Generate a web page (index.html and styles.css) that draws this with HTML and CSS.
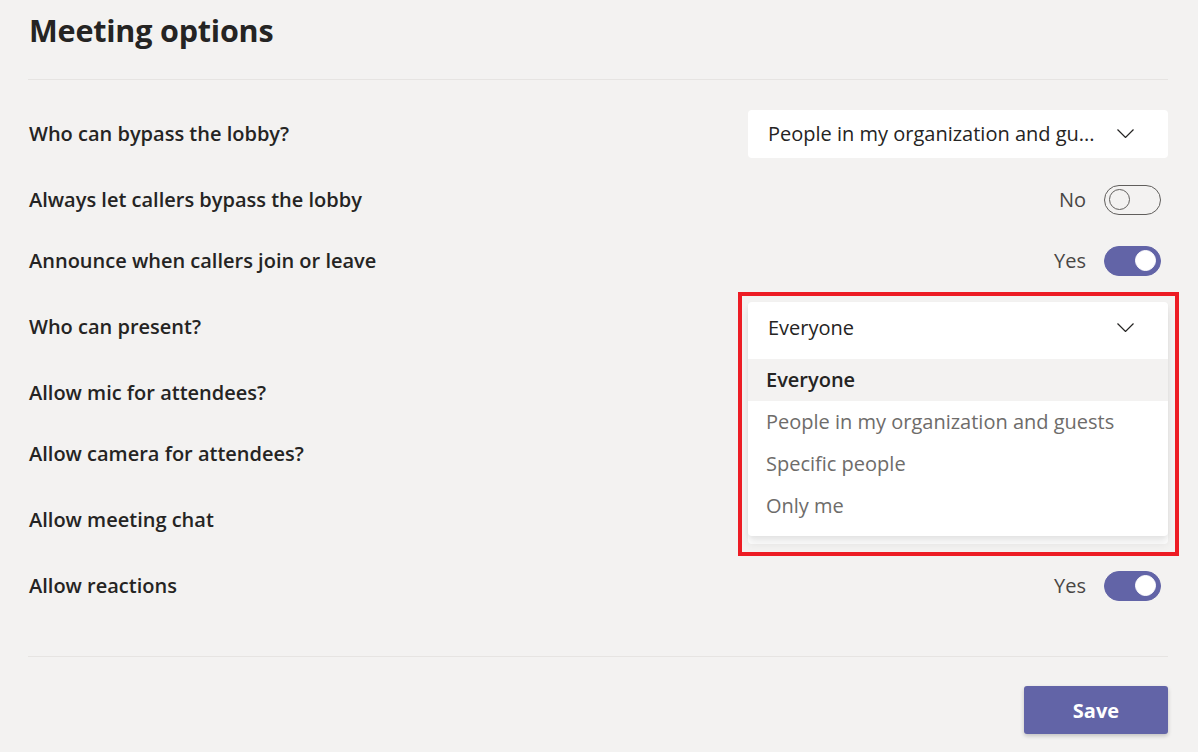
FILE: index.html
```html
<!DOCTYPE html>
<html>
<head lang="en">
    <meta charset="UTF-8">
    <title>Meeting options</title>
    <link rel="stylesheet" href="styles.css">
</head>
<body>
<div class="page">
    <h1 class="page-title">Meeting options</h1>
    <div class="divider"></div>

    <div class="options">
        <div class="option-row row-select">
            <span class="option-label">Who can bypass the lobby?</span>
            <div class="select">
                <span class="select-value">People in my organization and gu...</span>
                <svg class="chevron" width="17" height="9" viewBox="0 0 17 9"><path d="M0.5 0.5 L8.5 8.5 L16.5 0.5" fill="none" stroke="#252423" stroke-width="1.2"/></svg>
            </div>
        </div>

        <div class="option-row row-toggle">
            <span class="option-label">Always let callers bypass the lobby</span>
            <div class="toggle-wrap">
                <span class="toggle-text">No</span>
                <span class="toggle"><span class="knob"></span></span>
            </div>
        </div>

        <div class="option-row row-toggle">
            <span class="option-label">Announce when callers join or leave</span>
            <div class="toggle-wrap">
                <span class="toggle-text">Yes</span>
                <span class="toggle on"><span class="knob"></span></span>
            </div>
        </div>

        <div class="option-row row-select">
            <span class="option-label">Who can present?</span>
            <div class="select open">
                <!-- opened list -->
                <div class="menu">
                    <div class="menu-head">
                        <span>Everyone</span>
                        <svg class="chevron" width="17" height="9" viewBox="0 0 17 9"><path d="M0.5 0.5 L8.5 8.5 L16.5 0.5" fill="none" stroke="#252423" stroke-width="1.2"/></svg>
                    </div>
                    <ul class="menu-list">
                        <li class="selected">Everyone</li>
                        <li>People in my organization and guests</li>
                        <li>Specific people</li>
                        <li>Only me</li>
                    </ul>
                </div>
                <div class="highlight-box"></div>
            </div>
        </div>

        <!-- controls below are hidden under the open list -->
        <div class="option-row row-toggle">
            <span class="option-label">Allow mic for attendees?</span>
            <div class="toggle-wrap">
                <span class="toggle on"><span class="knob"></span></span>
            </div>
        </div>

        <div class="option-row row-toggle">
            <span class="option-label">Allow camera for attendees?</span>
            <div class="toggle-wrap">
                <span class="toggle on"><span class="knob"></span></span>
            </div>
        </div>

        <div class="option-row row-select">
            <span class="option-label">Allow meeting chat</span>
            <div class="select"></div>
        </div>

        <div class="option-row row-toggle">
            <span class="option-label">Allow reactions</span>
            <div class="toggle-wrap">
                <span class="toggle-text">Yes</span>
                <span class="toggle on"><span class="knob"></span></span>
            </div>
        </div>
    </div>

    <div class="divider"></div>

    <div class="footer">
        <button class="save-btn">Save</button>
    </div>
</div>
</body>
</html>
```

FILE: styles.css
```css
html, body{
    margin: 0;
    padding: 0;
    height: 100%;
    background: #f3f2f1;
    font-family: "Open Sans", "Noto Sans", sans-serif;
    color: #252423;
    overflow: hidden;
}

.page{
    padding: 0 30px 0 28px;
}

.page-title{
    margin: 0;
    padding-top: 10px;
    height: 79px;
    box-sizing: border-box;
    font-size: 30.5px;
    font-weight: 700;
    line-height: 40px;
    letter-spacing: -0.2px;
    padding-left: 1px;
}

.divider{
    height: 1px;
    background: #e6e4e2;
}

.options{
    padding: 18px 0 40px;
}

.option-row{
    display: flex;
    justify-content: space-between;
    align-items: center;
}

.row-select{
    height: 71px;
}

.row-toggle{
    height: 61px;
}

.option-label{
    font-size: 20px;
    font-weight: 600;
    padding-left: 1px;
}

/* dropdown */
.select{
    position: relative;
    width: 420px;
    height: 48px;
    box-sizing: border-box;
    background: #fff;
    border-radius: 4px;
    display: flex;
    align-items: center;
    justify-content: space-between;
    padding: 0 34px 0 20px;
    font-size: 20px;
}

.select-value{
    white-space: nowrap;
}

.chevron{
    display: block;
}

.menu{
    position: absolute;
    z-index: 2;
    top: -1px;
    left: 0;
    right: 0;
    background: #fff;
    border-radius: 4px;
    box-shadow: 0 8px 8px rgba(0,0,0,0.07), 0 2px 4px rgba(0,0,0,0.05);
    padding-bottom: 9px;
}

.menu-head{
    height: 57px;
    box-sizing: border-box;
    padding: 0 34px 5px 20px;
    display: flex;
    align-items: center;
    justify-content: space-between;
    font-size: 20px;
}

.menu-list{
    margin: 0;
    padding: 0;
    list-style: none;
}

.menu-list li{
    height: 42px;
    line-height: 42px;
    padding-left: 18px;
    font-size: 20px;
    color: #6e6c6a;
}

.menu-list li.selected{
    background: #f3f2f1;
    color: #252423;
    font-weight: 600;
}

/* red annotation frame */
.highlight-box{
    position: absolute;
    z-index: 3;
    top: -11px;
    left: -10px;
    width: 441px;
    height: 264px;
    box-sizing: border-box;
    border: 4px solid #ed1c24;
}

/* toggles */
.toggle-wrap{
    display: flex;
    align-items: center;
    gap: 18px;
    padding-right: 7px;
}

.toggle-text{
    font-size: 20px;
    color: #484644;
}

.toggle{
    position: relative;
    width: 57px;
    height: 30px;
    box-sizing: border-box;
    border: 1px solid #605e5c;
    border-radius: 15px;
    display: flex;
    align-items: center;
    padding: 0 4px;
}

.toggle .knob{
    width: 21px;
    height: 21px;
    box-sizing: border-box;
    border: 1px solid #605e5c;
    border-radius: 50%;
}

.toggle.on{
    background: #6264a7;
    border-color: #6264a7;
    justify-content: flex-end;
}

.toggle.on .knob{
    background: #fff;
    border-color: #fff;
}

/* footer */
.footer{
    display: flex;
    justify-content: flex-end;
    padding-top: 29px;
}

.save-btn{
    width: 144px;
    height: 48px;
    border: none;
    border-radius: 3px;
    background: #6264a7;
    color: #fff;
    font-family: "Open Sans", "Noto Sans", sans-serif;
    font-size: 20px;
    font-weight: 700;
    box-shadow: 0 2px 4px rgba(0,0,0,0.2);
}
```
